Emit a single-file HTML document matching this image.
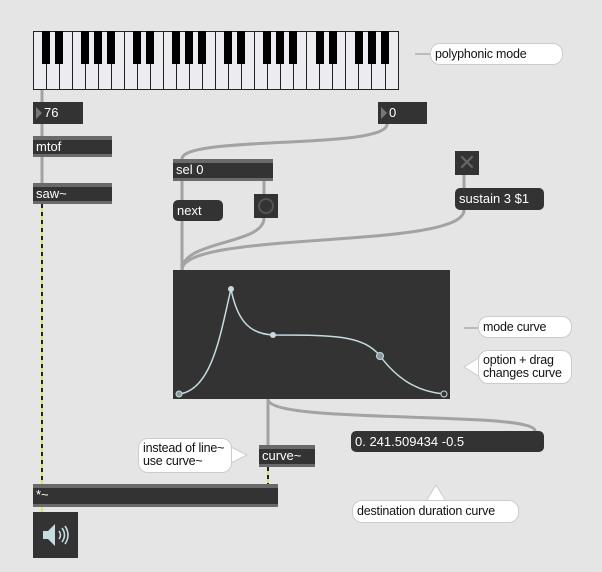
<!DOCTYPE html>
<html><head><meta charset="utf-8"><style>
body{margin:0;width:602px;height:572px;background:#e5e5e5;position:relative;overflow:hidden;font-family:"Liberation Sans",Arial,sans-serif}
.a{position:absolute;box-sizing:border-box}
.obj{background:#333;border-top:4px solid #6a6a6a;border-bottom:3px solid #6a6a6a;color:#fff;font-size:13px;line-height:14px;padding-left:3px;white-space:nowrap}
.msg{background:#333;border-radius:5px;color:#fff;font-size:13px;line-height:21px;padding-left:4px;white-space:nowrap}
.num{background:#333;color:#fff;font-size:13px;line-height:22px;padding-left:11px}
.num:before{content:"";position:absolute;left:3px;top:5px;border-left:6px solid #777;border-top:6px solid transparent;border-bottom:6px solid transparent}
.cm{background:#fff;border:1px solid #ccc;border-radius:10px;color:#111;font-size:12.5px;line-height:14px;padding:3px 4px;white-space:nowrap;letter-spacing:-0.2px}
</style></head><body>
<svg class="a" style="left:0;top:0" width="602" height="572">
<g fill="none" stroke="#a3a3a3" stroke-width="3">
<path d="M42 89V136M42 157V183"/>
<path d="M387 124C387 150 182 135 182 159"/>
<path d="M182 181V270M264 181V194"/>
<path d="M264 218C264 245 182 240 182 270"/>
<path d="M464 210C464 250 182 230 182 270"/>
<path d="M268 399V445"/>
<path d="M268 399C268 425 535 410 535 431"/>
<path d="M464 175V188"/>
<path d="M415 54H430M464 328H479" stroke="#bbb" stroke-width="2"/>
</g>
<path d="M42 204V484M268 467V484M42 506V512" stroke="#d6e85a" stroke-width="2"/>
<path d="M42 204V484M268 467V484" stroke="#222" stroke-width="2" stroke-dasharray="4 4"/>
</svg>
<svg class="a" style="left:33px;top:31px" width="366" height="59">
<rect x="0.5" y="0.5" width="365" height="58" fill="#ececf0" stroke="#222"/>
<path stroke="#222" d="M13.5 0V59M26.5 0V59M39.5 0V59M52.5 0V59M65.5 0V59M78.5 0V59M91.5 0V59M104.5 0V59M117.5 0V59M130.5 0V59M143.5 0V59M156.5 0V59M169.5 0V59M182.5 0V59M195.5 0V59M208.5 0V59M221.5 0V59M234.5 0V59M247.5 0V59M260.5 0V59M273.5 0V59M286.5 0V59M299.5 0V59M312.5 0V59M325.5 0V59M338.5 0V59M352.5 0V59"/>
<g fill="#000">
<rect x="9" y="0" width="8" height="33"/><rect x="22" y="0" width="8" height="33"/><rect x="48" y="0" width="8" height="33"/><rect x="61" y="0" width="8" height="33"/><rect x="74" y="0" width="8" height="33"/>
<rect x="100" y="0" width="8" height="33"/><rect x="113" y="0" width="8" height="33"/><rect x="139" y="0" width="8" height="33"/><rect x="152" y="0" width="8" height="33"/><rect x="165" y="0" width="8" height="33"/>
<rect x="191" y="0" width="8" height="33"/><rect x="204" y="0" width="8" height="33"/><rect x="230" y="0" width="8" height="33"/><rect x="243" y="0" width="8" height="33"/><rect x="256" y="0" width="8" height="33"/>
<rect x="283" y="0" width="8" height="33"/><rect x="296" y="0" width="8" height="33"/><rect x="322" y="0" width="8" height="33"/><rect x="335" y="0" width="8" height="33"/><rect x="348" y="0" width="8" height="33"/>
</g>
</svg>
<div class="a num" style="left:33px;top:102px;width:50px;height:22px">76</div>
<div class="a num" style="left:378px;top:102px;width:49px;height:22px">0</div>
<div class="a obj" style="left:33px;top:136px;width:79px;height:21px">mtof</div>
<div class="a obj" style="left:33px;top:183px;width:79px;height:21px">saw~</div>
<div class="a obj" style="left:173px;top:159px;width:100px;height:22px">sel 0</div>
<div class="a msg" style="left:173px;top:200px;width:50px;height:21px">next</div>
<div class="a" style="left:254px;top:194px;width:24px;height:24px;background:#333"><div class="a" style="left:4px;top:4px;width:16px;height:16px;border:2px solid #555;border-radius:50%"></div></div>
<div class="a" style="left:455px;top:151px;width:24px;height:24px;background:#333;color:#666;font-size:22px;line-height:24px;text-align:center">✕</div>
<div class="a msg" style="left:455px;top:188px;width:89px;height:22px">sustain 3 $1</div>
<div class="a cm" style="left:430px;top:43px;width:133px;height:22px">polyphonic mode</div>
<svg class="a" style="left:173px;top:270px" width="277" height="129">
<rect width="277" height="129" fill="#333"/>
<path d="M6 124C40 120 48 60 58 19C65 55 80 64 100 65C160 65 190 65 207 86C228 114 250 122 271 124" fill="none" stroke="#c5dde0" stroke-width="1.5"/>
<g fill="#c5dde0"><circle cx="58" cy="19" r="3"/><circle cx="100" cy="65" r="3"/></g>
<g fill="#889a9c" stroke="#c5dde0"><circle cx="6" cy="124" r="3"/><circle cx="207" cy="86" r="3.5"/></g>
<circle cx="271" cy="124" r="3" fill="#333" stroke="#c5dde0"/>
</svg>
<div class="a cm" style="left:478px;top:316px;width:94px;height:22px">mode curve</div>
<svg class="a" style="left:462px;top:355px" width="20" height="25"><path d="M18 2L2 12L18 22Z" fill="#fff" stroke="#ccc"/></svg>
<div class="a cm" style="left:478px;top:350px;width:94px;height:34px;line-height:13px">option + drag<br>changes curve</div>
<div class="a msg" style="left:351px;top:431px;width:193px;height:21px">0. 241.509434 -0.5</div>
<div class="a obj" style="left:259px;top:445px;width:56px;height:22px">curve~</div>
<svg class="a" style="left:225px;top:443px" width="25" height="25"><path d="M2 2L22 12L2 22Z" fill="#fff" stroke="#ccc"/></svg>
<div class="a cm" style="left:138px;top:438px;width:94px;height:35px;line-height:13px">instead of line~<br>use curve~</div>
<div class="a obj" style="left:33px;top:484px;width:245px;height:23px">*~</div>
<div class="a" style="left:33px;top:512px;width:45px;height:46px;background:#333">
<svg width="45" height="46"><path d="M10 19H15L22 12V34L15 27H10Z" fill="#c5dde0"/><path d="M26 19Q29 23 26 27M29 16Q34 23 29 30M32 14Q38 23 32 32" fill="none" stroke="#c5dde0" stroke-width="1.6"/></svg></div>
<svg class="a" style="left:425px;top:484px" width="22" height="18"><path d="M1 17L11 1L21 17Z" fill="#fff" stroke="#ccc"/></svg>
<div class="a cm" style="left:352px;top:500px;width:167px;height:23px">destination duration curve</div>
</body></html>
